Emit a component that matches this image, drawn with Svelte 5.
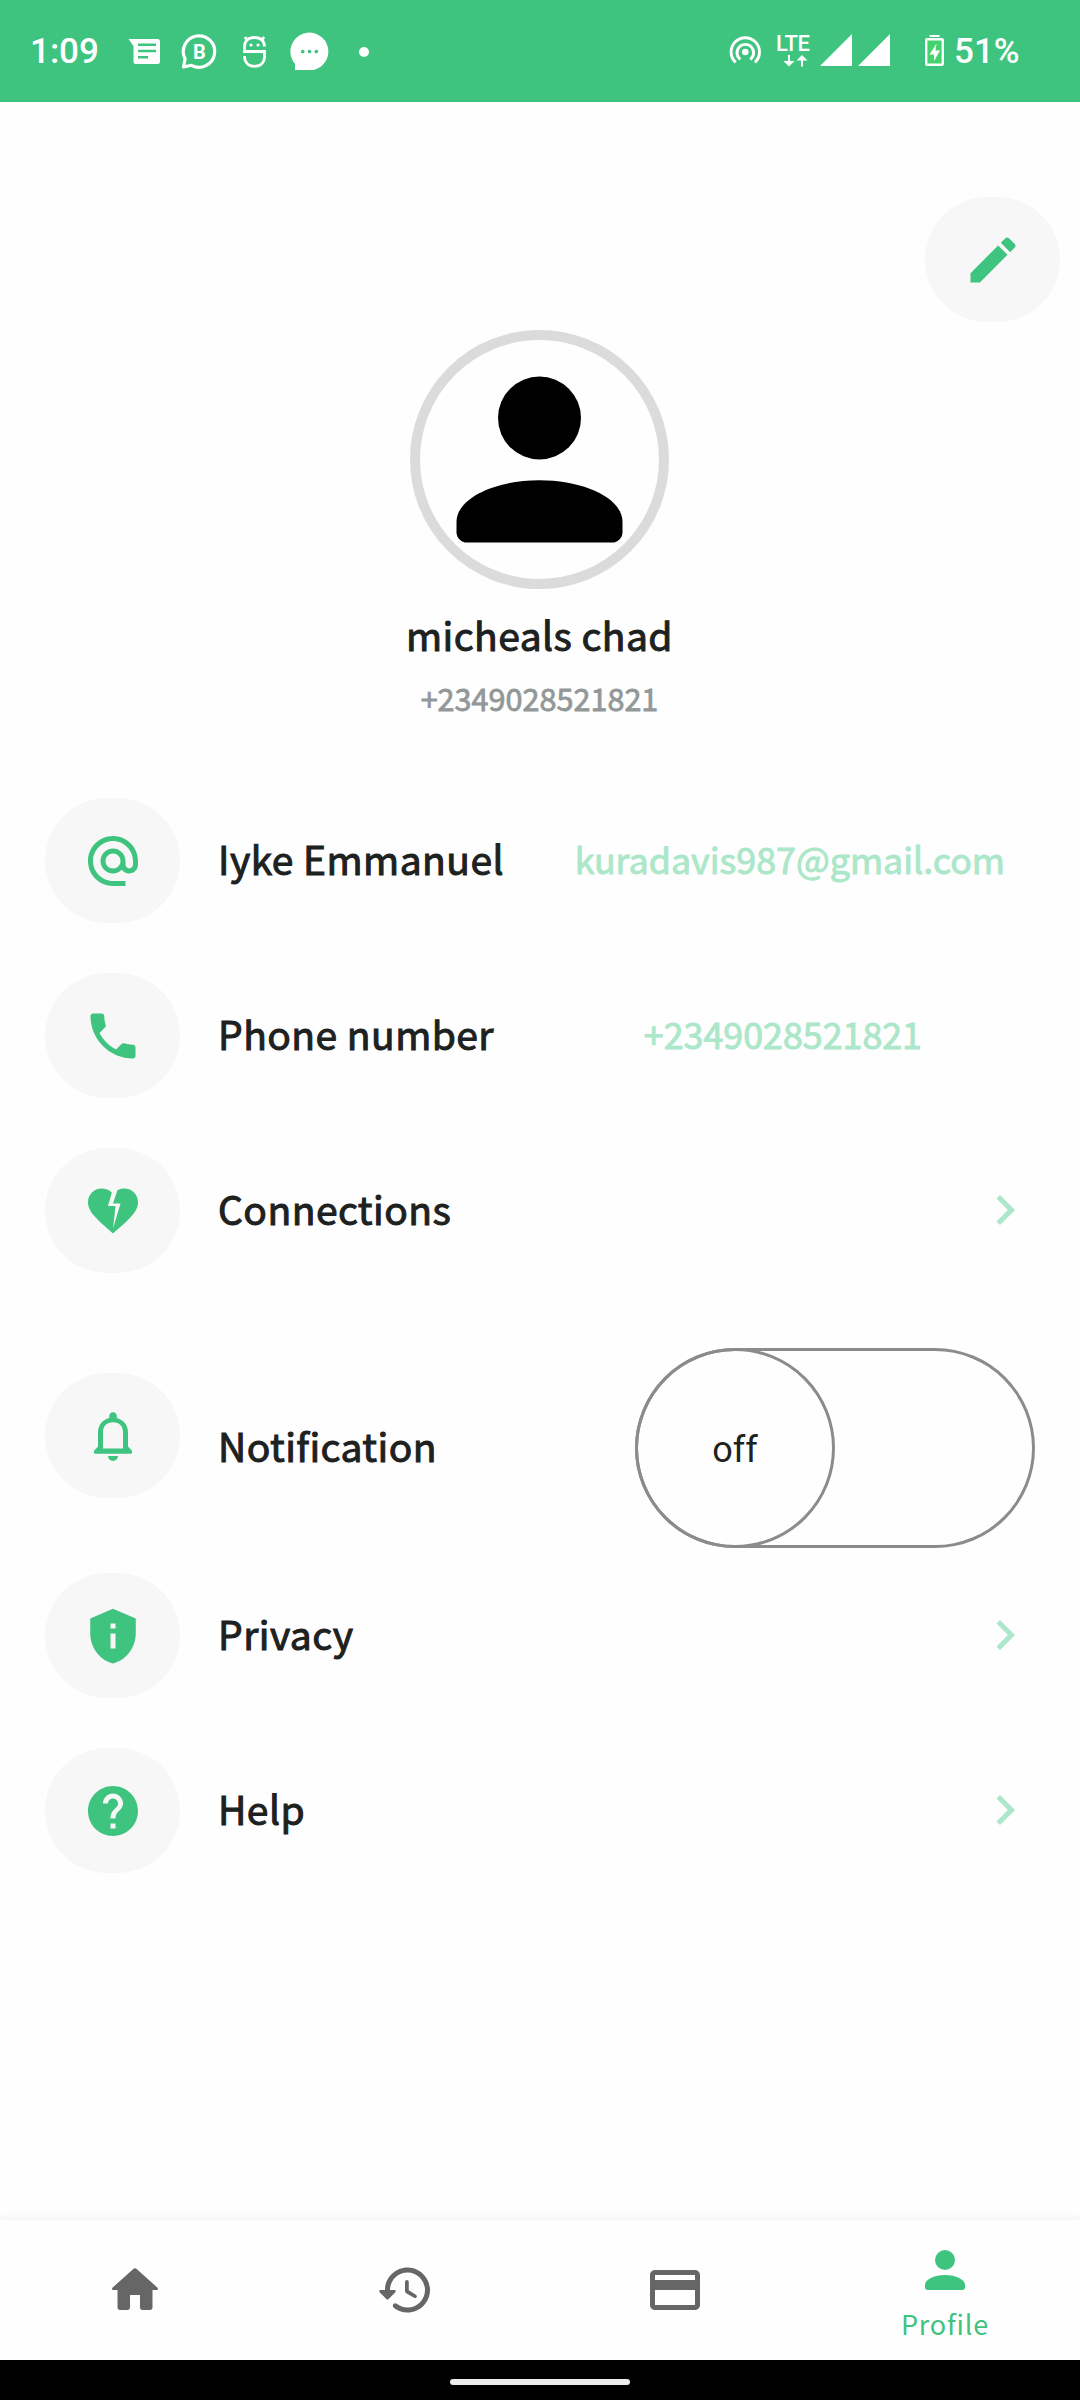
<script>
  const rows = [
    { icon: 'at', label: 'Iyke Emmanuel', value: 'kuradavis987@gmail.com', kind: 'email' },
    { icon: 'phone', label: 'Phone number', value: '+2349028521821', kind: 'tel' },
    { icon: 'heart', label: 'Connections', kind: 'link' },
    { icon: 'bell', label: 'Notification', kind: 'toggle' },
    { icon: 'shield', label: 'Privacy', kind: 'link' },
    { icon: 'help', label: 'Help', kind: 'link' },
  ];
  const icons = {
    at: 'M12 2C6.48 2 2 6.48 2 12s4.48 10 10 10h5v-2h-5c-4.34 0-8-3.66-8-8s3.66-8 8-8 8 3.66 8 8v1.43c0 .79-.71 1.57-1.5 1.57s-1.5-.78-1.5-1.57V12c0-2.76-2.24-5-5-5s-5 2.24-5 5 2.24 5 5 5c1.38 0 2.64-.56 3.54-1.47.65.89 1.77 1.47 2.96 1.47 1.97 0 3.5-1.6 3.5-3.57V12c0-5.52-4.48-10-10-10zm0 13c-1.66 0-3-1.34-3-3s1.34-3 3-3 3 1.34 3 3-1.34 3-3 3z',
    phone: 'M4 3h3.500c.55 0 1 .45 1 1 0 1.250.2 2.450.57 3.570.11.35.03.74-.25 1.020L6.620 10.790c1.440 2.830 3.760 5.140 6.590 6.590l2.200-2.200c.27-.27.67-.36 1.020-.24 1.120.37 2.330.57 3.570.57.55 0 1 .45 1 1V20c0 .55-.45 1-1 1C10.610 21 3 13.390 3 4c0-.55.45-1 1-1z',
    heart: 'M16.500 3c-.96 0-1.900.25-2.730.69L12 9h3l-3 10 1-9h-3l1.540-5.390C10.470 3.610 9.010 3 7.500 3 4.420 3 2 5.420 2 8.500c0 4.130 4.160 7.180 10 12.500 5.470-4.940 10-8.260 10-12.500C22 5.420 19.580 3 16.500 3z',
    bell: 'M12 2.500c-.83 0-1.500.67-1.500 1.500v.8C7.900 5.420 6 7.700 6 10.500v5.700L4.700 17.600c-.6.600-.4 1.500.3 1.500h14c.7 0 .9-.9.3-1.500L18 16.200v-5.700c0-2.800-1.900-5.080-4.500-5.700V4c0-.83-.67-1.500-1.500-1.500zM8 17v-6.500c0-2.480 1.510-4 4-4s4 1.520 4 4V17zM10 20a2 2 0 0 0 4 0z',
    shield: 'M12 1.100L2.900 5v6c0 5.550 3.840 10.740 9.100 12 5.260-1.260 9.100-6.450 9.100-12V5zM11 7h2v2h-2zm0 4h2v6h-2z',
    help: 'M12 2C6.480 2 2 6.480 2 12s4.480 10 10 10 10-4.480 10-10S17.520 2 12 2zm1 17h-2v-2h2v2zm2.070-7.750l-.9.920C13.450 12.900 13 13.500 13 15h-2v-.5c0-1.100.45-2.100 1.170-2.830l1.240-1.260c.37-.36.59-.86.59-1.410 0-1.100-.9-2-2-2s-2 .9-2 2H8c0-2.210 1.790-4 4-4s4 1.790 4 4c0 .88-.36 1.680-.930 2.250z',
  };
</script>

{#snippet person()}
  <circle cx="12" cy="8" r="4" />
  <path d="M12 14C7.58 14 4 15.790 4 18v1c0 .55.45 1 1 1h14c.55 0 1-.45 1-1v-1c0-2.210-3.580-4-8-4z" />
{/snippet}

<div class="screen">
  <header class="status">
    <span class="clock">1:09</span>
    <svg class="s-left" width="240" height="44" viewBox="125 30 240 44">
      <path fill-rule="evenodd" d="M128.500 39H157.500q2.500 0 2.500 2.500v20q0 2.500-2.500 2.500h-21.500q-2.500 0-2.500-2.500V46zM138 43.500v2.600h18v-2.600zM138 49.700v2.600h18v-2.600zM138 56v2.600h10V56z" />
      <path d="M183.500 67l1.600-8.200A15.700 15.700 0 1 1 191.500 65.300z" fill="none" stroke="#fff" stroke-width="3.200" stroke-linejoin="round" />
      <text x="193" y="58.500" class="b">B</text>
      <g fill="none" stroke="#fff" stroke-width="2.800">
        <path d="M264.500 46.500c0-5.500-4-9-10-9s-10 3.500-10 9v5h20v5c0 6-4 9.800-10 9.800s-10-4-10-10.300" />
        <path d="M247 40l-2-3M262 40l2-3" />
      </g>
      <circle cx="251" cy="45" r="1.600" /><circle cx="258" cy="45" r="1.600" />
      <path fill-rule="evenodd" d="M295 70V64A19 19 0 1 1 314 70zM302.700 49.700a1.800 1.800 0 1 0 .01 0zM309.500 49.700a1.800 1.800 0 1 0 .01 0zM316.300 49.700a1.800 1.800 0 1 0 .01 0z" />
    </svg>
    <span class="dot"></span>
    <svg class="s-right" width="220" height="44" viewBox="728 30 220 44">
      <circle cx="745.300" cy="52" r="3.300" />
      <g fill="none" stroke="#fff" stroke-width="2.900">
        <path d="M740.400 59.400a8.300 8.300 0 1 1 9.800 0" />
        <path d="M735.700 62.400a14.200 14.200 0 1 1 19.200 0" />
      </g>
      <text x="776" y="51" class="lte">LTE</text>
      <path d="M788 55h2v6h4.500l-5.500 5.500-5.500-5.500h4.500zM801 66.500h2v-6h4.500l-5.500-5.500-5.500 5.500h4.500z" />
      <path d="M820 66h32V34zM858 66h32V34z" />
      <path d="M929.500 35h10v2h-10z" />
      <rect x="926.200" y="39.200" width="16.600" height="25.600" rx="1" fill="#43d36d" stroke="#fff" stroke-width="2.400" />
      <path d="M936.500 43.500l-7 11h4.500v6.500l6-10.500h-4.500z" />
    </svg>
    <span class="battery">51%</span>
  </header>

  <main>
    <div class="topbar">
      <span class="pad"><svg class="ico" viewBox="0 0 24 24"><path d="M3 17.250V21h3.750L17.810 9.940l-3.750-3.750zM20.710 7.040c.39-.39.39-1.020 0-1.410l-2.340-2.340c-.39-.39-1.020-.39-1.410 0l-1.830 1.830 3.750 3.750z" /></svg></span>
    </div>
    <section class="profile">
      <div class="avatar"><svg viewBox="0 0 24 24">{@render person()}</svg></div>
      <h1>micheals chad</h1>
      <p>+2349028521821</p>
    </section>

    <ul>
      {#each rows as row}
        <li class={row.kind}>
          <span class="pad">
            <svg class="ico" viewBox="0 0 24 24"><path fill-rule="evenodd" d={icons[row.icon]} /></svg>
          </span>
          <span class="label">{row.label}</span>
          {#if row.value}
            <span class="value">{row.value}</span>
          {:else if row.kind === 'toggle'}
            <span class="switch"><span class="knob">off</span></span>
          {:else}
            <svg class="chev" viewBox="0 0 24 24"><path d="M10 6L8.590 7.410 13.170 12l-4.580 4.590L10 18l6-6z" /></svg>
          {/if}
        </li>
      {/each}
    </ul>
  </main>

  <nav>
    <span class="tab"><svg viewBox="0 0 24 24"><path d="M10 19v-5h4v5c0 .55.45 1 1 1h3c.55 0 1-.45 1-1v-7h1.700c.46 0 .68-.57.33-.87L12.670 3.600c-.38-.34-.96-.34-1.340 0l-8.360 7.530c-.34.300-.13.870.33.870H5v7c0 .55.45 1 1 1h3c.55 0 1-.45 1-1z" /></svg></span>
    <span class="tab"><svg viewBox="0 0 24 24"><path d="M13.260 3C8.170 2.860 4 6.950 4 12H2.210c-.45 0-.67.54-.35.85l2.790 2.800c.2.2.51.2.71 0l2.790-2.800c.31-.31.09-.85-.36-.85H6c0-3.900 3.180-7.050 7.100-7 3.720.05 6.850 3.180 6.900 6.900.05 3.910-3.100 7.100-7 7.100-1.610 0-3.100-.55-4.280-1.480-.4-.31-.96-.28-1.320.08-.42.42-.39 1.130.08 1.490C9 20.290 10.910 21 13 21c5.050 0 9.140-4.170 9-9.260-.13-4.690-4.050-8.610-8.740-8.740zM12.750 8c-.41 0-.75.34-.75.75v3.680c0 .35.19.68.49.86l3.120 1.850c.36.21.82.09 1.030-.26.21-.36.09-.82-.26-1.030l-2.880-1.710v-3.400c0-.4-.34-.74-.75-.74z" /></svg></span>
    <span class="tab"><svg viewBox="0 0 24 24"><path fill-rule="evenodd" d="M20 4H4c-1.110 0-2 .89-2 2v12c0 1.110.89 2 2 2h16c1.110 0 2-.89 2-2V6c0-1.110-.89-2-2-2zM4 6h16v2H4zM4 12h16v6H4z" /></svg></span>
    <span class="tab active"><svg viewBox="0 0 24 24">{@render person()}</svg><b>Profile</b></span>
  </nav>
  <div class="gesture"><i></i></div>
</div>

<style>
  :global(body) { background: #fff; }
  .screen {
    width: 1080px;
    height: 2400px;
    display: flex;
    flex-direction: column;
    background: #fefefe;
    font-family: 'Noto Sans CJK SC', 'Noto Sans', sans-serif;
    color: #1d2120;
    overflow: hidden;
  }
  svg { display: block; flex: none; fill: currentColor; }
  .status {
    height: 102px;
    flex: none;
    display: flex;
    align-items: center;
    background: #3ec47f;
    color: #fff;
    font: 500 35px/44px Roboto, sans-serif;
    padding: 2px 0 0 30px;
    box-sizing: border-box;
    white-space: nowrap;
  }
  .clock { width: 95px; }
  .b { font: 700 20px Roboto, sans-serif; }
  .lte { font: 500 22px Roboto, sans-serif; letter-spacing: -0.6px; }
  .dot { width: 10px; height: 10px; margin-left: -6px; border-radius: 50%; background: #fff; }
  .s-right { margin-left: 359px; }
  .battery { margin-left: 6px; }
  main { flex: 1; min-height: 0; }
  .topbar { display: flex; justify-content: flex-end; padding: 95px 20px 0 0; }
  .pad {
    width: 135px;
    height: 125px;
    flex: none;
    box-sizing: border-box;
    padding: 1px 0 0 1px;
    border-radius: 62.5px;
    background: #f7f7f7;
    color: #3ec47f;
    display: flex;
    align-items: center;
    justify-content: center;
  }
  .ico { width: 60px; height: 60px; }
  .profile { display: flex; flex-direction: column; align-items: center; height: 476px; padding: 8px 1px 0 0; box-sizing: border-box; }
  .avatar {
    width: 259px;
    height: 259px;
    box-sizing: border-box;
    border: 10px solid #dbdbdb;
    border-radius: 50%;
    display: flex;
    align-items: center;
    justify-content: center;
    color: #000;
  }
  .avatar svg { width: 249px; height: 249px; margin: -5px; }
  h1, p, .label, .value { font-weight: 400; -webkit-text-stroke: 0.026em currentColor; }
  h1 { margin: 15px 0 0; font-size: 39px; line-height: 60px; letter-spacing: 0.45px; }
  p { margin: 10px 0 0; font-size: 30.6px; line-height: 48px; color: #929897; }
  ul { margin: 0; padding: 0 45px; list-style: none; display: flex; flex-direction: column; gap: 50px; }
  li { display: flex; align-items: center; height: 125px; }
  .label { flex: 1; padding: 0 0 6px 38px; font-size: 39px; line-height: 60px; letter-spacing: 0.45px; }
  .value { padding-bottom: 6px; font-size: 35.8px; line-height: 56px; color: #abe7c8; }
  .email .value { margin-right: 30px; }
  .tel .value { margin-right: 113px; }
  .toggle { height: 200px; margin: 25px 0 -25px; }
  .toggle .pad { margin-top: -25px; }
  .toggle .label { padding-bottom: 7px; }
  .switch {
    width: 400px;
    height: 200px;
    box-sizing: border-box;
    border-radius: 100px;
    box-shadow: inset 0 0 0 3px #8b8b8b;
  }
  .knob {
    width: 200px;
    height: 200px;
    box-sizing: border-box;
    border: 3px solid #8b8b8b;
    border-radius: 50%;
    display: flex;
    align-items: center;
    justify-content: center;
    padding-top: 3px;
    font: 400 36px/42px Roboto, sans-serif;
  }
  .chev { width: 60px; height: 60px; margin-bottom: 1px; color: #abe7c8; }
  nav {
    height: 140px;
    flex: none;
    display: grid;
    grid-template-columns: repeat(4, 1fr);
    background: #fefefe;
    color: #666;
    box-shadow: 0 -1px 8px rgba(0, 0, 0, 0.06);
  }
  .tab { display: flex; flex-direction: column; align-items: center; justify-content: center; }
  .tab svg { width: 60px; height: 60px; }
  .active { justify-content: flex-start; padding-top: 20px; color: #3ec47f; }
  .active b { margin-top: 6px; font-size: 27px; line-height: 36px; font-weight: 400; letter-spacing: 0.8px; }
  .gesture { height: 40px; flex: none; background: #000; display: flex; justify-content: center; align-items: center; }
  .gesture i { width: 180px; height: 6px; margin-top: 4px; border-radius: 3px; background: #ececec; }
</style>
